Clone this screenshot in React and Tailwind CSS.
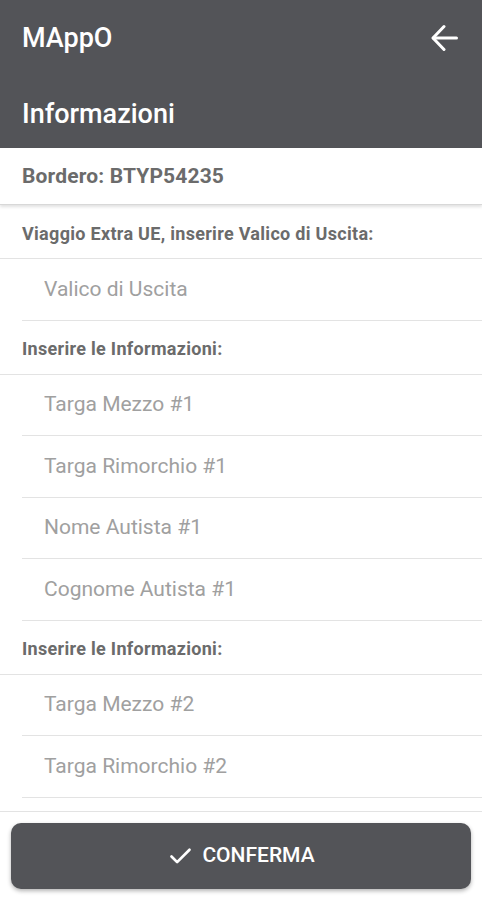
import React from 'react'
import { Check } from 'lucide-react'

const sections = [
  { label: 'Viaggio Extra UE, inserire Valico di Uscita:', fields: ['Valico di Uscita'] },
  { label: 'Inserire le Informazioni:', fields: ['Targa Mezzo #1', 'Targa Rimorchio #1', 'Nome Autista #1', 'Cognome Autista #1'] },
  { label: 'Inserire le Informazioni:', fields: ['Targa Mezzo #2', 'Targa Rimorchio #2', 'Nome Autista #2', 'Cognome Autista #2'] },
]

function LabelRow({ children }) {
  return (
    <div className="h-[54px] flex items-center px-[22px] pt-[3px] border-b border-[#e3e3e3] text-[18px] font-bold tracking-[0.3px] text-[#6b6b6b]">
      {children}
    </div>
  )
}

function FieldRow({ placeholder }) {
  return (
    <div className="h-[61.5px] ml-[22px] pl-[22px] flex items-center border-b border-[#e3e3e3]">
      <input
        placeholder={placeholder}
        className="w-full bg-transparent outline-none text-[21px] text-[#555] placeholder:text-[#a0a0a0]"
      />
    </div>
  )
}

export default function App() {
  return (
    <div
      className="h-[900px] w-full flex flex-col bg-white overflow-hidden"
      style={{ fontFamily: 'Roboto, "Noto Sans", sans-serif' }}
    >
      {/* Toolbar */}
      <div className="h-[148px] bg-[#535458] text-white flex flex-col shrink-0">
        <div className="h-[76px] flex items-center justify-between pl-[22px] pr-[24px]">
          <span className="text-[27px] font-medium">MAppO</span>
          <svg width="27" height="28" viewBox="0 0 27 28" fill="none" stroke="currentColor" strokeWidth="3" strokeLinecap="round" strokeLinejoin="round">
            <polyline points="13,2.5 2,14 13,25.5" />
            <line x1="2.5" y1="14" x2="25.5" y2="14" />
          </svg>
        </div>
        <div className="flex-1 flex items-center px-[22px] pt-[4px]">
          <span className="text-[27px] font-medium">Informazioni</span>
        </div>
      </div>

      {/* Bordero header */}
      <div className="relative z-10 h-[57px] flex items-center px-[22px] pt-[2px] border-b border-[#d8d8d8] shadow-[0_2px_3px_rgba(0,0,0,0.12)] shrink-0">
        <span className="text-[21px] font-bold tracking-[0.15px] text-[#6b6b6b]">Bordero: BTYP54235</span>
      </div>

      {/* Scrollable form */}
      <div className="flex-1 overflow-hidden">
        {sections.map((s, i) => (
          <div key={i}>
            <LabelRow>{s.label}</LabelRow>
            {s.fields.map((f) => (
              <FieldRow key={f} placeholder={f} />
            ))}
          </div>
        ))}
      </div>

      {/* Footer */}
      <div className="h-[89px] shrink-0 border-t border-[#e3e3e3] px-[11px] pt-[11px]">
        <button className="w-full h-[66px] rounded-[10px] bg-[#535458] text-white flex items-center justify-center gap-[8px] shadow-[0_2px_4px_rgba(0,0,0,0.3)]">
          <Check size={27} strokeWidth={2.4} />
          <span className="text-[21px] font-medium">CONFERMA</span>
        </button>
      </div>
    </div>
  )
}
